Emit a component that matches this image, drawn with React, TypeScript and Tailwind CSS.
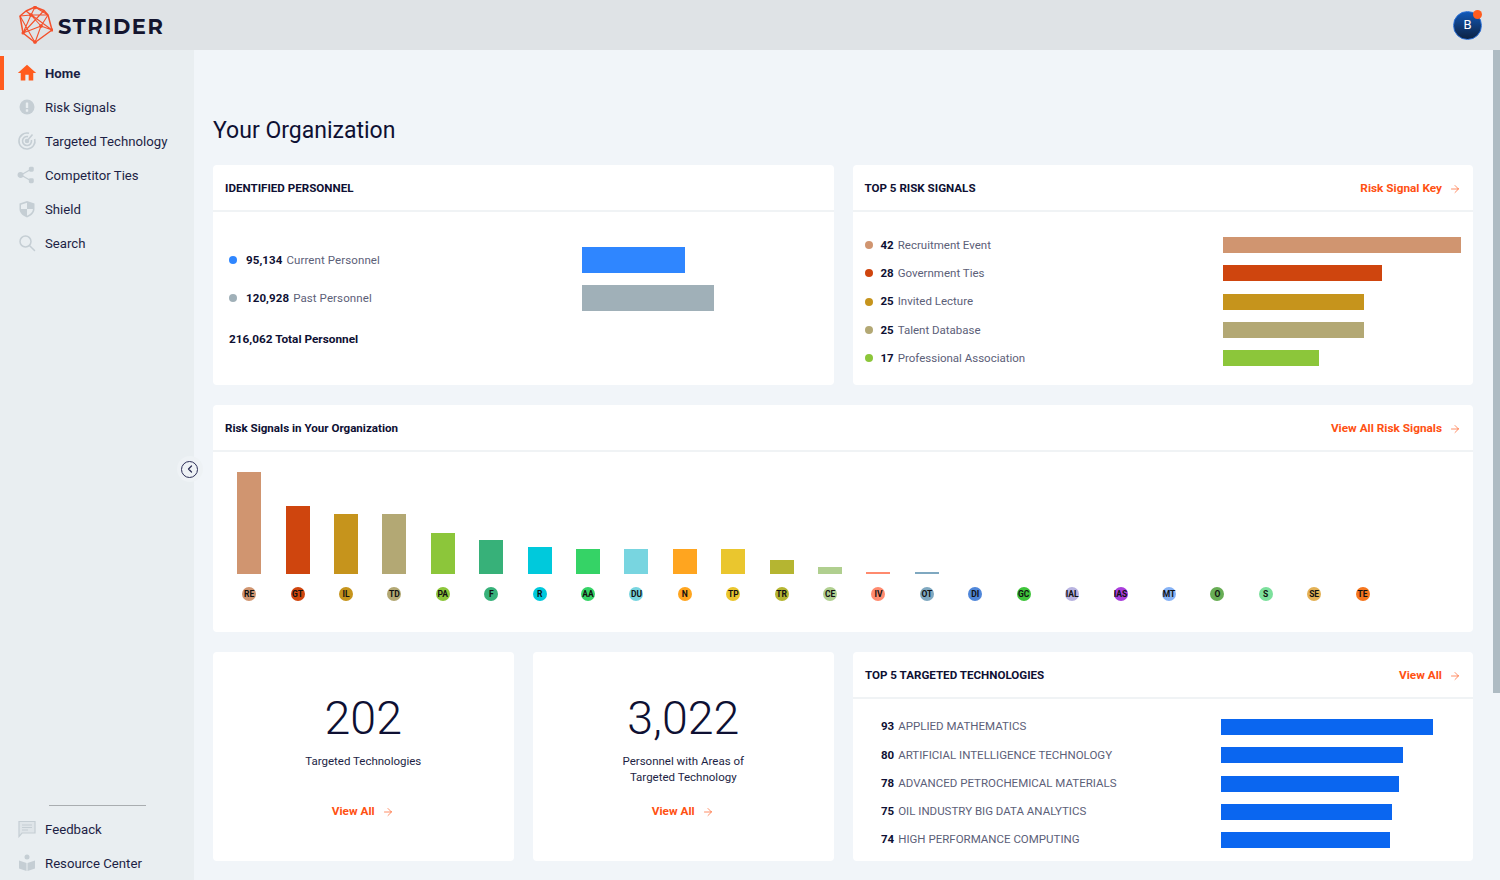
import React from 'react';
import { ArrowRight, ChevronLeft } from 'lucide-react';

const riskRows = [
  { n: 42, label: 'Recruitment Event', color: 'bg-[#d09570]', w: 'w-[238px]' },
  { n: 28, label: 'Government Ties', color: 'bg-[#cf450e]', w: 'w-[159px]' },
  { n: 25, label: 'Invited Lecture', color: 'bg-[#c6941c]', w: 'w-[141px]' },
  { n: 25, label: 'Talent Database', color: 'bg-[#b3a874]', w: 'w-[141px]' },
  { n: 17, label: 'Professional Association', color: 'bg-[#8cc63a]', w: 'w-[96px]' },
];

const techRows = [
  { n: 93, label: 'APPLIED MATHEMATICS', w: 'w-[212px]' },
  { n: 80, label: 'ARTIFICIAL INTELLIGENCE TECHNOLOGY', w: 'w-[182px]' },
  { n: 78, label: 'ADVANCED PETROCHEMICAL MATERIALS', w: 'w-[178px]' },
  { n: 75, label: 'OIL INDUSTRY BIG DATA ANALYTICS', w: 'w-[171px]' },
  { n: 74, label: 'HIGH PERFORMANCE COMPUTING', w: 'w-[169px]' },
];

const columns = [
  { code: 'RE', color: 'bg-[#d09570]', h: 'h-[102px]' },
  { code: 'GT', color: 'bg-[#cf450e]', h: 'h-[68px]' },
  { code: 'IL', color: 'bg-[#c6941c]', h: 'h-[60px]' },
  { code: 'TD', color: 'bg-[#b3a874]', h: 'h-[60px]' },
  { code: 'PA', color: 'bg-[#8cc63a]', h: 'h-[41px]' },
  { code: 'F', color: 'bg-[#37b179]', h: 'h-[34px]' },
  { code: 'R', color: 'bg-[#00c9dc]', h: 'h-[27px]' },
  { code: 'AA', color: 'bg-[#35d366]', h: 'h-[25px]' },
  { code: 'DU', color: 'bg-[#78d5e0]', h: 'h-[25px]' },
  { code: 'N', color: 'bg-[#ffa51f]', h: 'h-[25px]' },
  { code: 'TP', color: 'bg-[#eac62e]', h: 'h-[25px]' },
  { code: 'TR', color: 'bg-[#b5b531]', h: 'h-[14px]' },
  { code: 'CE', color: 'bg-[#b0cf8f]', h: 'h-[7px]' },
  { code: 'IV', color: 'bg-[#ff8a6e]', h: 'h-[2px]' },
  { code: 'OT', color: 'bg-[#7fa8c0]', h: 'h-[2px]' },
  { code: 'DI', color: 'bg-[#4f86d9]', h: 'h-0' },
  { code: 'GC', color: 'bg-[#3ec43a]', h: 'h-0' },
  { code: 'IAL', color: 'bg-[#b8b3e0]', h: 'h-0' },
  { code: 'IAS', color: 'bg-[#a93ddb]', h: 'h-0' },
  { code: 'MT', color: 'bg-[#86b2f5]', h: 'h-0' },
  { code: 'O', color: 'bg-[#68ad55]', h: 'h-0' },
  { code: 'S', color: 'bg-[#7ce09c]', h: 'h-0' },
  { code: 'SE', color: 'bg-[#e3b155]', h: 'h-0' },
  { code: 'TE', color: 'bg-[#f5761e]', h: 'h-0' },
];

const Logo = () => (
  <svg width="34" height="38" viewBox="0 0 34 38" fill="none" stroke="#f4512c" strokeWidth="1.100" strokeLinejoin="round">
    <path d="M16 1 L25 4.500 L29 9 L33 24 L16 36.500 L4 27 L1 10 L7 5 Z" strokeWidth="1.500" />
    <path d="M16 1 L12 9 L7 5 M16 1 L29 9 M12 9 L22 20 L33 24 M12 9 L29 9 M12 9 L1 10 M12 9 L4 27 M22 20 L4 27 M22 20 L16 36.500 M22 20 L29 9 M1 10 L16 36.500 M7 5 L33 24 M25 4.500 L4 27" />
    <circle cx="12" cy="9" r="1.300" fill="#f4512c" />
    <circle cx="22" cy="20" r="1.300" fill="#f4512c" />
    <circle cx="16" cy="1.500" r="1.300" fill="#f4512c" />
    <circle cx="16" cy="36" r="1.300" fill="#f4512c" />
    <circle cx="33" cy="24" r="1" fill="#f4512c" />
    <circle cx="4" cy="27" r="1" fill="#f4512c" />
  </svg>
);

const NavIcon = ({ name }: { name: string }) => {
  const gray = '#c5ced4';
  if (name === 'Home')
    return (
      <svg width="20" height="20" viewBox="0 0 24 24" fill="#ff5c1f">
        <path d="M10 21v-7h4v7h5.500v-9H23L12 2 1 12h3.500v9z" />
      </svg>
    );
  if (name === 'Risk Signals')
    return (
      <svg width="18" height="18" viewBox="0 0 18 18">
        <circle cx="9" cy="9" r="7.500" fill={gray} />
        <rect x="7.800" y="4.500" width="2.400" height="5.500" rx="0.500" fill="#e9eef1" />
        <rect x="7.800" y="11.300" width="2.400" height="2.400" rx="0.500" fill="#e9eef1" />
      </svg>
    );
  if (name === 'Targeted Technology')
    return (
      <svg width="20" height="20" viewBox="0 0 20 20" fill="none" stroke={gray} strokeWidth="1.600">
        <path d="M12 2.300 A8 8 0 1 0 17.700 8" />
        <path d="M11 5.600 A4.500 4.500 0 1 0 14.400 9" />
        <path d="M10 10 L15.500 3.500" />
        <circle cx="10" cy="10" r="1.500" fill={gray} />
      </svg>
    );
  if (name === 'Competitor Ties')
    return (
      <svg width="20" height="20" viewBox="0 0 20 20" fill={gray} stroke={gray} strokeWidth="1.300">
        <path d="M4 10 L13.500 4.500 M4 10 L13.500 15.500" />
        <circle cx="3.500" cy="10" r="2.300" />
        <rect x="12.500" y="2.500" width="3.600" height="3.600" rx="0.800" />
        <rect x="12.500" y="13.900" width="3.600" height="3.600" rx="0.800" />
      </svg>
    );
  if (name === 'Shield')
    return (
      <svg width="18" height="18" viewBox="0 0 18 18">
        <path d="M9 1 L16.500 3.500 V9 C16.500 13 13 16 9 17.500 C5 16 1.500 13 1.500 9 V3.500 Z" fill={gray} />
        <path d="M9 2.800 V9 H3 V4.800 Z M9 9 H15 C14.700 12 12.300 14.400 9 15.700 Z" fill="#e9eef1" />
      </svg>
    );
  if (name === 'Search')
    return (
      <svg width="18" height="18" viewBox="0 0 18 18" fill="none" stroke={gray} strokeWidth="1.500" strokeLinecap="round">
        <circle cx="7.500" cy="7.500" r="5.500" />
        <path d="M11.700 11.700 L16.500 16.500" />
      </svg>
    );
  if (name === 'Feedback')
    return (
      <svg width="18" height="18" viewBox="0 0 18 18" fill="#dfe5e9" stroke={gray} strokeWidth="1.200">
        <path d="M1 1.500 H17 V13 H4 L1 16.500 Z" />
        <path d="M4 5 H14 M4 7.500 H14 M4 10 H10" />
      </svg>
    );
  return (
    <svg width="18" height="18" viewBox="0 0 18 18" fill={gray}>
      <circle cx="9" cy="3" r="2.500" />
      <path d="M1 6.500 L8.500 9 V17 L1 14.500 Z M17 6.500 L9.500 9 V17 L17 14.500 Z" />
    </svg>
  );
};

const NavItem = ({ label, active }: { label: string; active?: boolean }) => (
  <div className={`flex h-[34px] items-center ${active ? 'border-l-[4px] border-[#ff5c1f] pl-[13px]' : 'pl-[17px]'}`}>
    <div className="mr-[8px] flex w-[20px] justify-center">
      <NavIcon name={label} />
    </div>
    <span className={`pt-[1px] text-[13.200px] text-[#1d1f45] ${active ? 'font-bold' : 'font-normal'}`}>{label}</span>
  </div>
);

const OrangeLink = ({ label }: { label: string }) => (
  <div className="flex items-center text-[11.800px] font-bold text-[#ff5113]">
    <span>{label}</span>
    <ArrowRight size={12} className="ml-[7px] mr-[1px]" strokeWidth={1.300} />
  </div>
);

const CardHeader = ({ title, link }: { title: string; link?: string }) => (
  <div className="flex h-[47px] items-center justify-between border-b-2 border-[#f0f3f5] pl-3 pr-[11px] pt-[3px]">
    <h3 className="text-[11.600px] font-bold text-[#0e1033]">{title}</h3>
    {link && <OrangeLink label={link} />}
  </div>
);

const StatCard = ({ value, children }: { value: string; children: React.ReactNode }) => (
  <div className="flex h-[209px] flex-col items-center rounded bg-white pt-[36px] text-center">
    <div className="text-[46.500px] leading-[60px] font-[350] text-[#0e1033]">{value}</div>
    <div className="mt-[5px] h-[50px] text-[11.500px] leading-[16px] text-[#1d1f45]">{children}</div>
    <OrangeLink label="View All" />
  </div>
);

export default function App() {
  return (
    <div className="flex h-[880px] w-[1500px] flex-col overflow-hidden bg-[#f1f5f9] font-['Roboto',sans-serif]">
      {/* top bar */}
      <header className="flex h-[50px] shrink-0 items-center justify-between bg-[#dfe3e6] pl-[19px] pr-[18px]">
        <div className="flex items-center">
          <Logo />
          <span className="ml-[5px] pt-[3px] font-['Montserrat','Inter',sans-serif] text-[21px] font-bold tracking-[1.600px] text-[#14152f]">STRIDER</span>
        </div>
        <div className="relative flex h-[29px] w-[29px] items-center justify-center rounded-full border border-[#2a6fd6] bg-gradient-to-b from-[#0f58b8] to-[#0c2344] text-[13px] text-white">
          B
          <span className="absolute -right-[1px] -top-[2px] h-[9px] w-[9px] rounded-full bg-[#ff5c1f]" />
        </div>
      </header>

      <div className="flex min-h-0 flex-1">
        {/* sidebar */}
        <aside className="relative flex w-[194px] shrink-0 flex-col justify-between bg-[#e9eef1] pb-0 pt-[6px]">
          <nav>
            <NavItem label="Home" active />
            <NavItem label="Risk Signals" />
            <NavItem label="Targeted Technology" />
            <NavItem label="Competitor Ties" />
            <NavItem label="Shield" />
            <NavItem label="Search" />
          </nav>
          <div>
            <div className="mx-auto mb-[6px] h-px w-[97px] bg-[#a9adb0]" />
            <NavItem label="Feedback" />
            <NavItem label="Resource Center" />
          </div>
          <div className="absolute -right-[8.500px] top-[406px] flex h-[26px] w-[26px] items-center justify-center rounded-full bg-[#eef2f5]">
            <div className="flex h-[17px] w-[17px] items-center justify-center rounded-full border border-[#2b2d55] text-[#2b2d55]">
              <ChevronLeft size={12} strokeWidth={2.500} />
            </div>
          </div>
        </aside>

        {/* main */}
        <main className="min-w-0 flex-1 pl-[19px] pr-[20px] pt-[65px]">
          <h1 className="h-[50px] text-[23px] leading-[32px] font-normal text-[#0e1033]">Your Organization</h1>

          <div className="grid grid-cols-2 gap-x-[19px] gap-y-5">
            <section className="h-[220px] rounded bg-white">
              <CardHeader title="IDENTIFIED PERSONNEL" />
              <div className="px-4 pt-[35px]">
                <div className="flex h-[26px] items-center">
                  <span className="mr-[9px] h-2 w-2 rounded-full bg-[#2f86ff]" />
                  <span className="w-[336px] pt-[2px] text-[11.500px] tracking-[0.100px] text-[#5c6078]">
                    <b className="mr-1 font-bold text-[#0e1033]">95,134</b>Current Personnel
                  </span>
                  <div className="h-[26px] w-[103px] bg-[#2f86ff]" />
                </div>
                <div className="mt-3 flex h-[26px] items-center">
                  <span className="mr-[9px] h-2 w-2 rounded-full bg-[#a0b0b8]" />
                  <span className="w-[336px] pt-[2px] text-[11.500px] tracking-[0.100px] text-[#5c6078]">
                    <b className="mr-1 font-bold text-[#0e1033]">120,928</b>Past Personnel
                  </span>
                  <div className="h-[26px] w-[132px] bg-[#a0b0b8]" />
                </div>
                <div className="mt-[20px] text-[11.800px] font-bold text-[#0e1033]">216,062 Total Personnel</div>
              </div>
            </section>

            <section className="h-[220px] rounded bg-white">
              <CardHeader title="TOP 5 RISK SIGNALS" link="Risk Signal Key" />
              <div className="flex flex-col gap-[12.250px] px-3 pt-[25px]">
                {riskRows.map((r) => (
                  <div key={r.label} className="flex h-4 items-center">
                    <span className={`mr-2 h-2 w-2 rounded-full ${r.color}`} />
                    <span className="w-[342px] pt-[1px] text-[11.500px] text-[#5c6078]">
                      <b className="mr-1 font-bold text-[#0e1033]">{r.n}</b>
                      {r.label}
                    </span>
                    <div className={`h-4 ${r.w} ${r.color}`} />
                  </div>
                ))}
              </div>
            </section>

            <section className="col-span-2 h-[227px] rounded bg-white">
              <CardHeader title="Risk Signals in Your Organization" link="View All Risk Signals" />
              <div className="flex pl-[12px] pt-[20px]">
                {columns.map((c) => (
                  <div key={c.code} className="flex w-[48.420px] flex-col items-center">
                    <div className="flex h-[102px] items-end">
                      <div className={`w-6 ${c.h} ${c.color}`} />
                    </div>
                    <div className={`mt-[13px] flex h-[14px] w-[14px] items-center justify-center rounded-full ${c.color} text-[8.500px] font-bold text-[#111]`}>
                      {c.code}
                    </div>
                  </div>
                ))}
              </div>
            </section>
          </div>

          <div className="mt-5 grid grid-cols-[300.500px_300.500px_620px] gap-x-[19.500px]">
            <StatCard value="202">Targeted Technologies</StatCard>
            <StatCard value="3,022">
              Personnel with Areas of
              <br />
              Targeted Technology
            </StatCard>
            <section className="h-[209px] rounded bg-white">
              <CardHeader title="TOP 5 TARGETED TECHNOLOGIES" link="View All" />
              <div className="flex flex-col gap-[12.250px] pl-7 pt-[20px]">
                {techRows.map((r) => (
                  <div key={r.label} className="flex h-4 items-center">
                    <span className="w-[340px] text-[11.500px] text-[#5c6078]">
                      <b className="mr-1 font-bold text-[#0e1033]">{r.n}</b>
                      {r.label}
                    </span>
                    <div className={`h-4 ${r.w} bg-[#0a66f0]`} />
                  </div>
                ))}
              </div>
            </section>
          </div>
        </main>

        {/* scrollbar */}
        <div className="w-[7px] shrink-0 bg-[#f1f5f9]">
          <div className="h-[643px] w-[7px] bg-[#aebbc3]" />
        </div>
      </div>
    </div>
  );
}
